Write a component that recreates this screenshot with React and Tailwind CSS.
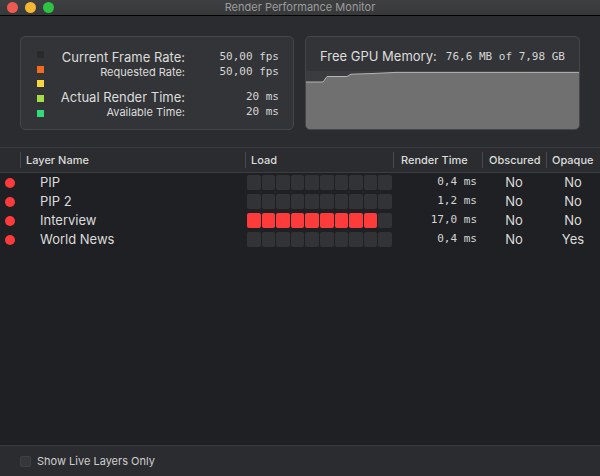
import React from "react";

const SANS = { fontFamily: "Inter, 'Noto Sans', sans-serif" };

const LAYERS = [
    { name: "PIP", load: 0, time: "0,4 ms", obscured: "No", opaque: "No" },
    { name: "PIP 2", load: 0, time: "1,2 ms", obscured: "No", opaque: "No" },
    { name: "Interview", load: 9, time: "17,0 ms", obscured: "No", opaque: "No" },
    { name: "World News", load: 0, time: "0,4 ms", obscured: "No", opaque: "Yes" },
];

const SWATCHES = ["bg-[#2a2a2a]", "bg-[#f26b1f]", "bg-[#f7d63e]", "bg-[#a5dc4a]", "bg-[#2edc7a]"];

function LoadBar({ value }) {
    return (
        <div className="flex w-[145px] gap-[1px]">
            {Array.from({ length: 10 }).map((_, i) => (
                <div
                    key={i}
                    className={`h-[15px] flex-1 rounded-[2px] ${i < value ? "bg-[#fe3b3b]" : "bg-[#323336]"}`}
                />
            ))}
        </div>
    );
}

function HeaderCell({ label, className }) {
    return (
        <div className={`flex h-full items-center ${className}`}>
            <div className="h-[16px] w-px bg-[#48494c]" />
            <span className="ml-[5px] text-[11px] font-medium text-[#dcdcdc]">{label}</span>
        </div>
    );
}

function StatRow({ label, value, big }) {
    return (
        <div className="flex h-[15px] items-center">
            <div className={`w-[137px] text-right text-[#dcdcdc] ${big ? "text-[13px]" : "text-[11px]"}`}>{label}</div>
            <div className="ml-[5px] w-[89px] text-right font-['DejaVu_Sans_Mono',monospace] text-[11px] text-[#d6d6d6]">
                {value}
            </div>
        </div>
    );
}

export default function App() {
    return (
        <div className="flex h-[476px] w-[600px] flex-col overflow-hidden bg-[#2b2c2f]" style={SANS}>
            {/* Title bar */}
            <div className="relative flex h-[15px] items-center bg-gradient-to-b from-[#3e3f41] to-[#37383a]">
                <div className="ml-[7px] flex gap-[7px]">
                    <div className="h-[11px] w-[11px] rounded-full bg-[#ee5a52]" />
                    <div className="h-[11px] w-[11px] rounded-full bg-[#f5b731]" />
                    <div className="h-[11px] w-[11px] rounded-full bg-[#2dc443]" />
                </div>
                <div className="absolute inset-0 flex items-center justify-center text-[11px] text-[#9c9c9c]">
                    Render Performance Monitor
                </div>
            </div>
            <div className="h-px bg-black" />

            {/* Top panels */}
            <div className="flex gap-[11px] px-[20px] pt-[20px] pb-[17px]">
                <div className="flex h-[94px] w-[274px] rounded-[5px] border border-[#45464a] bg-[#333437]">
                    <div className="ml-[16px] mt-[14px] flex flex-col gap-[7.7px]">
                        {SWATCHES.map((c, i) => (
                            <div key={i} className={`h-[7px] w-[7px] ${c}`} />
                        ))}
                    </div>
                    <div className="ml-[4px] mt-[13px] flex flex-col">
                        <StatRow big label="Current Frame Rate:" value="50,00 fps" />
                        <StatRow label="Requested Rate:" value="50,00 fps" />
                        <div className="h-[10px]" />
                        <StatRow big label="Actual Render Time:" value="20 ms" />
                        <StatRow label="Available Time:" value="20 ms" />
                    </div>
                </div>
                <div className="flex h-[94px] w-[275px] flex-col overflow-hidden rounded-[5px] border border-[#45464a] bg-[#333437]">
                    <div className="flex h-[34px] items-start justify-center pt-[12px]">
                        <span className="text-[13px] leading-[15px] text-[#dedede]">Free GPU Memory:</span>
                        <span className="ml-[9px] font-['DejaVu_Sans_Mono',monospace] text-[11px] leading-[15px] text-[#d6d6d6]">
                            76,6 MB of 7,98 GB
                        </span>
                    </div>
                    <svg className="block flex-1" width="273" height="58" viewBox="0 0 273 58" preserveAspectRatio="none">
                        <rect x="0" y="0" width="273" height="58" fill="#3b3c3f" />
                        <path
                            d="M0 11 L17 11 L21 5.5 L41 5.5 L45 3.2 L65 2.6 L90 1.4 L273 1.4 L273 58 L0 58 Z"
                            fill="#707070"
                        />
                        <path
                            d="M0 11 L17 11 L21 5.5 L41 5.5 L45 3.2 L65 2.6 L90 1.4 L273 1.4"
                            fill="none"
                            stroke="#b4b4b4"
                            strokeWidth="1"
                        />
                    </svg>
                </div>
            </div>

            {/* Table header */}
            <div className="flex h-[26px] border-y border-[#3c3d40] bg-[#2b2c2f]">
                <div className="w-[20px]" />
                <HeaderCell label="Layer Name" className="w-[225px]" />
                <HeaderCell label="Load" className="w-[148px]" />
                <HeaderCell label="Render Time" className="w-[89px] [&>span]:ml-[7px]" />
                <HeaderCell label="Obscured" className="w-[64px] [&>span]:ml-[6px]" />
                <HeaderCell label="Opaque" className="flex-1" />
            </div>

            {/* Rows */}
            <div className="flex flex-1 flex-col bg-[#1f2023]">
                {LAYERS.map((l) => (
                    <div key={l.name} className="flex h-[19px] items-center">
                        <div className="flex w-[20px] justify-center">
                            <div className="h-[10px] w-[10px] rounded-full bg-[#fe3a3a]" />
                        </div>
                        <div className="w-[225px] pl-[20px] text-[13px] text-[#dcdcdc]">{l.name}</div>
                        <div className="w-[148px] pl-[2px]">
                            <LoadBar value={l.load} />
                        </div>
                        <div className="w-[89px] pr-[5px] text-right font-['DejaVu_Sans_Mono',monospace] text-[11px] text-[#d6d6d6]">
                            {l.time}
                        </div>
                        <div className="w-[64px] text-center text-[13px] text-[#dcdcdc]">{l.obscured}</div>
                        <div className="flex-1 text-center text-[13px] text-[#dcdcdc]">{l.opaque}</div>
                    </div>
                ))}
            </div>

            {/* Footer */}
            <div className="flex h-[31px] items-center border-t border-[#3a3b3e] bg-[#2b2c2f] pl-[20px]">
                <div className="h-[11px] w-[11px] rounded-[2px] border border-[#3f4043] bg-[#36373a]" />
                <span className="ml-[6px] text-[11px] text-[#cfcfcf]">Show Live Layers Only</span>
            </div>
        </div>
    );
}
